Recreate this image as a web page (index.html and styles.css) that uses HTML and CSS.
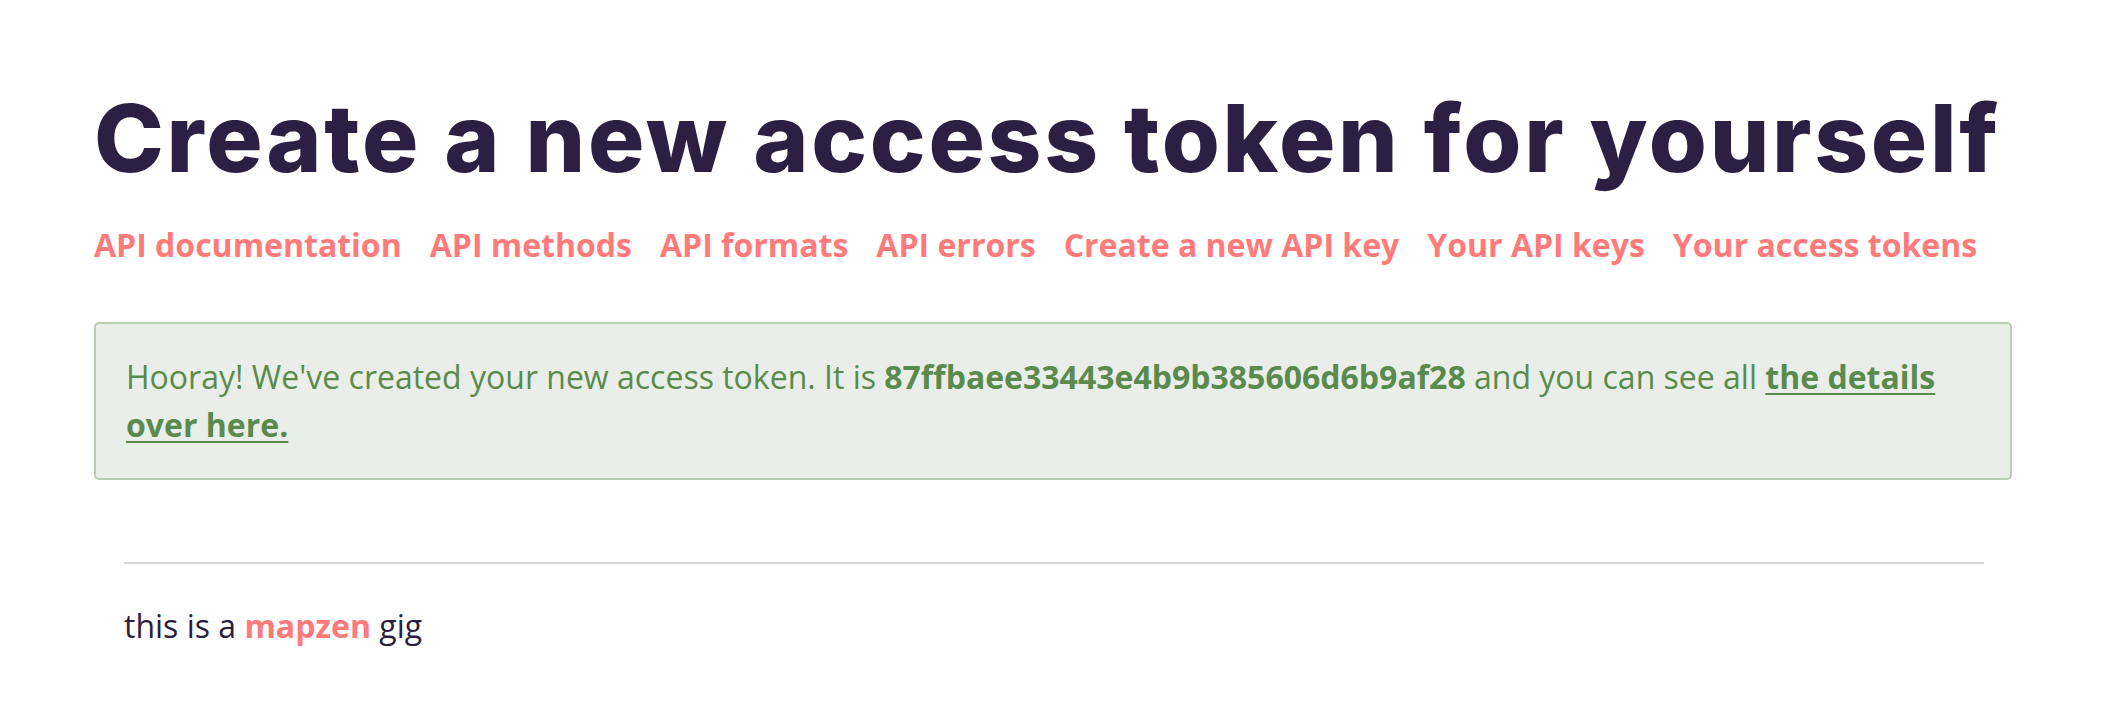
FILE: index.html
```html
<!DOCTYPE html>
<html lang="en">
<head>
<meta charset="utf-8">
<title>Create a new access token for yourself</title>
<link rel="stylesheet" href="styles.css">
</head>
<body>
<main class="page">
  <h1 class="title">Create a new access token for yourself</h1>
  <nav class="nav">
    <a href="#">API documentation</a>
    <a href="#">API methods</a>
    <a href="#">API formats</a>
    <a href="#">API errors</a>
    <a href="#">Create a new API key</a>
    <a href="#">Your API keys</a>
    <a href="#">Your access tokens</a>
  </nav>
  <div class="alert">
    Hooray! We've created your new access token. It is <strong>87ffbaee33443e4b9b385606d6b9af28</strong> and you can see all <a href="#">the details over here.</a>
  </div>
  <footer class="footer">
    <hr class="rule">
    <p class="gig">this is a <a href="#">mapzen</a> gig</p>
  </footer>
</main>
</body>
</html>
```

FILE: styles.css
```css
html, body {
  margin: 0;
  background: #ffffff;
}
body {
  font-family: "Open Sans", "Liberation Sans", sans-serif;
  color: #2a1f3d;
}
.page {
  padding: 0 94px;
}
.title {
  font-family: Inter, "Noto Sans", sans-serif;
  font-weight: 800;
  font-size: 94px;
  line-height: 1;
  letter-spacing: 2.7px;
  color: #2c1f44;
  margin: 0;
  padding-top: 91px;
}
.nav {
  display: flex;
  gap: 28px;
  margin-top: 36px;
  font-size: 32px;
  font-weight: 700;
  line-height: 48px;
}
.nav a {
  color: #ff7b7b;
  text-decoration: none;
}
.alert {
  margin-top: 53px;
  border: 2px solid #b8cdb3;
  border-radius: 5px;
  background: #e9efe8;
  color: #5b8a4e;
  font-size: 32px;
  line-height: 48px;
  padding: 29px 30px;
}
.alert strong {
  font-weight: 700;
}
.alert a {
  color: #5b8a4e;
  font-weight: 700;
  text-decoration: underline;
  text-decoration-thickness: 2px;
  text-underline-offset: 4px;
}
.footer {
  padding: 0 28px 0 30px;
}
.rule {
  border: 0;
  height: 2px;
  background: #d2d2d2;
  margin: 82px 0 0;
}
.gig {
  margin: 40px 0 0;
  font-size: 32px;
  line-height: 1.4;
  color: #2a1f3d;
}
.gig a {
  color: #ff7b7b;
  font-weight: 700;
  text-decoration: none;
}
```
